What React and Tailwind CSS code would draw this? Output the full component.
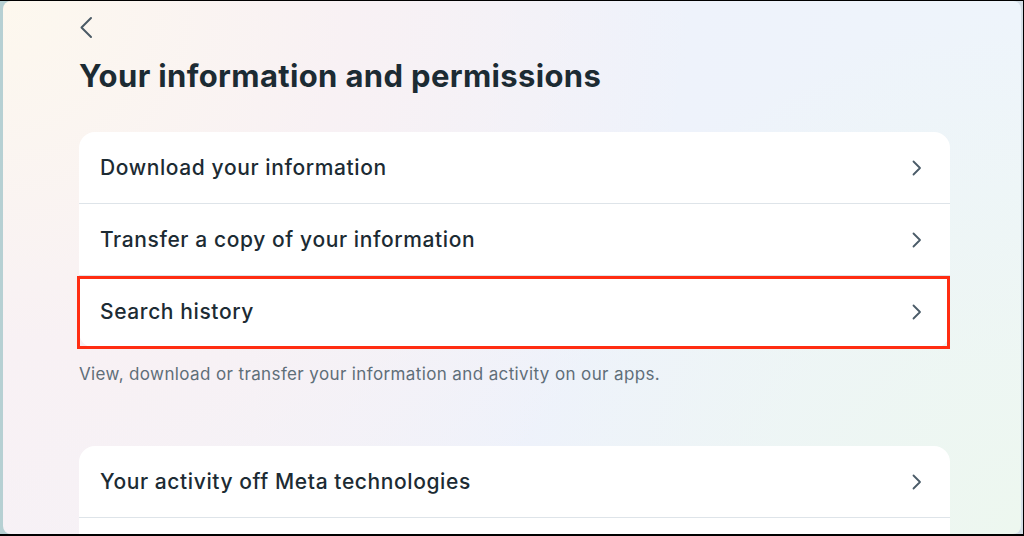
import React from "react";

const rows1 = [
  { label: "Download your information" },
  { label: "Transfer a copy of your information" },
  { label: "Search history", highlight: true },
];

function Chevron() {
  return (
    <svg width="10" height="16" viewBox="0 0 10 16" fill="none" className="shrink-0">
      <path d="M1.5 1.5 8 8l-6.5 6.5" stroke="#4a5b68" strokeWidth="1.8" strokeLinecap="round" strokeLinejoin="round" />
    </svg>
  );
}

function Row({ label, highlight, last }) {
  return (
    <div className={"relative flex items-center justify-between h-[72px] pl-[21px] pr-[28px] " + (last ? "" : "border-b border-[#dee4e9]")}>
      <span className="text-[21px] font-medium text-[#1c2b33] tracking-[0.6px]">{label}</span>
      <Chevron />
      {highlight && (
        <span className="absolute left-[-2px] right-0 top-0 bottom-[-1px] border-[3px] border-[#ff2d12] pointer-events-none" />
      )}
    </div>
  );
}

export default function App() {
  return (
    <div className="w-[1024px] h-[536px] bg-black pt-px pr-px pb-[2px] overflow-hidden" style={{ fontFamily: "Inter, 'Noto Sans', sans-serif" }}>
      <div className="h-full bg-linear-to-r from-[#b6d0d3] to-[#d3dee6] pl-[3px] pr-[2px]">
        <div className="h-full rounded-lg overflow-hidden bg-[radial-gradient(circle_at_0%_0%,#fdf8ee_0%,#f8f1f4_30%,transparent_60%),radial-gradient(circle_at_100%_100%,#edf7ef_0%,transparent_45%),linear-gradient(100deg,#f7f1f6_0%,#eef2fb_55%,#eef5fb_100%)] pl-[76px] pr-[71px]">
          <div className="pt-[14px]">
            <svg width="16" height="24" viewBox="0 0 16 24" fill="none" className="-ml-px">
              <path d="M13 3 3.5 12.5 13 22" stroke="#4b5b66" strokeWidth="2" strokeLinecap="round" strokeLinejoin="round" />
            </svg>
          </div>
          <h1 className="mt-[19px] text-[31px] leading-[36px] font-bold text-[#1c2b33] tracking-[0.35px]">
            Your information and permissions
          </h1>
          <div className="mt-[38px] bg-white rounded-2xl">
            {rows1.map((r, i) => (
              <Row key={r.label} {...r} last={i === rows1.length - 1} />
            ))}
          </div>
          <p className="mt-[16px] text-[17px] leading-[20px] text-[#5f6e79] tracking-[0.38px]">
            View, download or transfer your information and activity on our apps.
          </p>
          <div className="mt-[62px] bg-white rounded-2xl">
            <Row label="Your activity off Meta technologies" />
            <Row label="" last />
          </div>
        </div>
      </div>
    </div>
  );
}
